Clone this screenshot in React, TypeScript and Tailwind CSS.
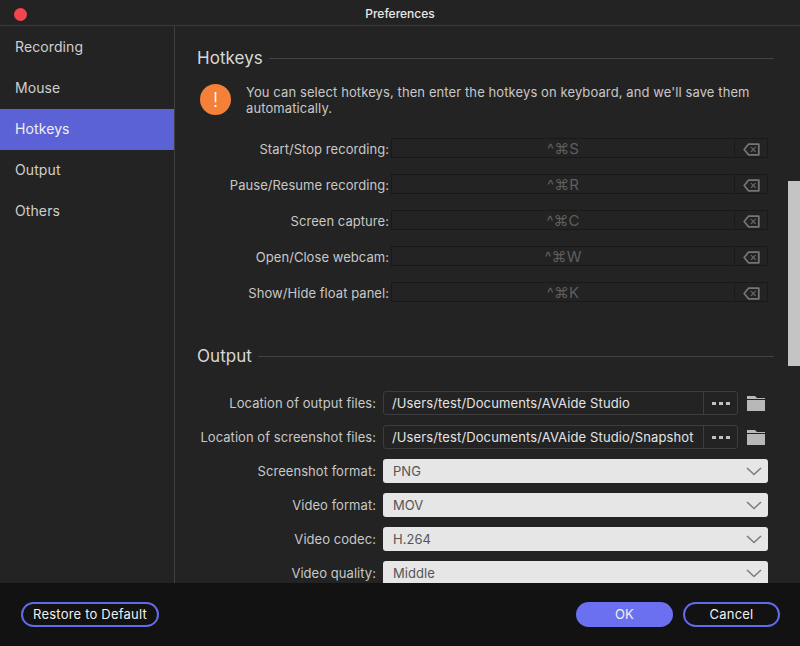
import React from 'react';

const navItems = ['Recording', 'Mouse', 'Hotkeys', 'Output', 'Others'];

const hotkeys = [
  { label: 'Start/Stop recording:', keys: '^⌘S' },
  { label: 'Pause/Resume recording:', keys: '^⌘R' },
  { label: 'Screen capture:', keys: '^⌘C' },
  { label: 'Open/Close webcam:', keys: '^⌘W' },
  { label: 'Show/Hide float panel:', keys: '^⌘K' },
];

const paths = [
  { label: 'Location of output files:', value: '/Users/test/Documents/AVAide Studio' },
  { label: 'Location of screenshot files:', value: '/Users/test/Documents/AVAide Studio/Snapshot' },
];

const selects = [
  { label: 'Screenshot format:', value: 'PNG' },
  { label: 'Video format:', value: 'MOV' },
  { label: 'Video codec:', value: 'H.264' },
  { label: 'Video quality:', value: 'Middle' },
];

function SectionTitle({ title }: { title: string }) {
  return (
    <div className="flex items-center gap-[6px] pr-[26px]">
      <span className="text-[17px] leading-5 text-[#d8d8d8]">{title}</span>
      <div className="h-px flex-1 bg-[#444444]" />
    </div>
  );
}

function BackspaceIcon() {
  return (
    <svg width="17" height="13" viewBox="0 0 17 13" fill="none">
      <path d="M5.5 1.2h10.3v10.6H5.5L1.2 6.5z" stroke="#757575" strokeWidth="1.8" strokeLinejoin="round" />
      <path d="M8 4.2l4.6 4.6M12.6 4.2L8 8.8" stroke="#6a6a6a" strokeWidth="1.2" />
    </svg>
  );
}

function FolderIcon() {
  return (
    <svg width="20" height="17" viewBox="0 0 20 17" fill="none">
      <path d="M1 1h8l2 2h8v1H1z" fill="#b8b8b8" />
      <rect x="1" y="5" width="18" height="11" fill="#b8b8b8" />
    </svg>
  );
}

function Chevron() {
  return (
    <svg width="16" height="9" viewBox="0 0 16 9" fill="none">
      <path d="M1 1l7 6.5L15 1" stroke="#7d7d7d" strokeWidth="1.6" />
    </svg>
  );
}

export default function App() {
  return (
    <div className="flex h-[646px] w-[800px] flex-col overflow-hidden bg-[#232323] font-['Inter',sans-serif] text-[13px] tracking-[0.05px] text-[#d4d4d4]">
      <header className="relative flex h-[26px] shrink-0 items-center justify-center border-b border-[#3a3a3a] pt-[2px]">
        <span className="absolute left-[14px] top-[8px] h-[13px] w-[13px] rounded-full bg-[#f0474f]" />
        <span className="text-[12px] font-medium tracking-normal text-[#e8e8e8]">Preferences</span>
      </header>

      <div className="flex min-h-0 flex-1">
        <nav className="flex w-[175px] shrink-0 flex-col border-r border-[#3f3f3f] pt-[1px]">
          {navItems.map((item) => (
            <div
              key={item}
              className={`flex h-[41px] items-center pb-[2px] pl-[15px] text-[14px] tracking-[0.1px] ${
                item === 'Hotkeys' ? 'bg-[#5b62d6] text-[#f0f0f0]' : 'text-[#cfcfcf]'
              }`}
            >
              {item}
            </div>
          ))}
        </nav>

        <main className="relative min-w-0 flex-1 overflow-hidden pl-[22px] pt-[22px]">
          <SectionTitle title="Hotkeys" />

          <div className="mt-[16px] flex items-start gap-[15px] pl-[3px]">
            <div className="flex h-[31px] w-[31px] shrink-0 items-center justify-center rounded-full bg-[#f58038] text-[20px] font-light text-white">
              !
            </div>
            <p className="w-[530px] text-[13px] leading-[16px] tracking-[0.1px] text-[#c8c8c8]">
              You can select hotkeys, then enter the hotkeys on keyboard, and we'll save them automatically.
            </p>
          </div>

          <div className="mt-[22px] flex flex-col gap-[16px]">
            {hotkeys.map((row) => (
              <div key={row.label} className="flex h-5 items-center">
                <span className="w-[192px] shrink-0 whitespace-nowrap pt-[3px] text-right text-[#c8c8c8]">{row.label}</span>
                <div className="ml-[2px] flex h-5 w-[377px] border border-[#191919]">
                  <div className="flex flex-1 items-center justify-center border-r border-[#191919] pt-[2px] text-[15px] text-[#5e5e5e]">
                    {row.keys}
                  </div>
                  <div className="flex w-8 items-center justify-center pt-[2px]">
                    <BackspaceIcon />
                  </div>
                </div>
              </div>
            ))}
          </div>

          <div className="mt-[44px]">
            <SectionTitle title="Output" />
          </div>

          <div className="mt-[25px] flex flex-col gap-[10px]">
            {paths.map((row) => (
              <div key={row.label} className="flex h-6 items-center">
                <span className="w-[179px] shrink-0 whitespace-nowrap pt-[2px] text-right text-[#c8c8c8]">{row.label}</span>
                <div className="ml-[7px] flex h-6 w-[355px] rounded-[3px] border border-[#3d3d3d]">
                  <div className="flex-1 truncate pl-2 leading-[22px] tracking-[0.12px] text-[#e4e4e4]">{row.value}</div>
                  <div className="flex w-[34px] items-center justify-center gap-[3px] border-l border-[#3d3d3d]">
                    <span className="h-[3px] w-[4px] bg-[#c0c0c0]" />
                    <span className="h-[3px] w-[4px] bg-[#c0c0c0]" />
                    <span className="h-[3px] w-[4px] bg-[#c0c0c0]" />
                  </div>
                </div>
                <div className="ml-[8px]">
                  <FolderIcon />
                </div>
              </div>
            ))}
            {selects.map((row) => (
              <div key={row.label} className="flex h-6 items-center">
                <span className="w-[179px] shrink-0 whitespace-nowrap pt-[2px] text-right text-[#c8c8c8]">{row.label}</span>
                <div className="ml-[7px] flex h-6 w-[385px] items-center justify-between rounded-[3px] bg-[#e6e6e6] pl-[10px] pr-[6px] text-[#555555]">
                  <span className="pt-[1px]">{row.value}</span>
                  <Chevron />
                </div>
              </div>
            ))}
          </div>

          <div className="absolute right-0 top-[155px] h-[185px] w-[12px] bg-[#c4c4c4]" />
        </main>
      </div>

      <footer className="flex h-[63px] shrink-0 items-center justify-between bg-[#121212] pl-[21px] pr-5 text-[13px] tracking-[0.2px] text-[#f0f0f0]">
        <button className="h-[25px] w-[138px] rounded-full border-2 border-[#636ae8]">
          Restore to Default
        </button>
        <div className="flex gap-[10px]">
          <button className="h-[25px] w-[97px] rounded-full bg-[#6a70f0]">OK</button>
          <button className="h-[25px] w-[97px] rounded-full border-2 border-[#636ae8]">Cancel</button>
        </div>
      </footer>
    </div>
  );
}
